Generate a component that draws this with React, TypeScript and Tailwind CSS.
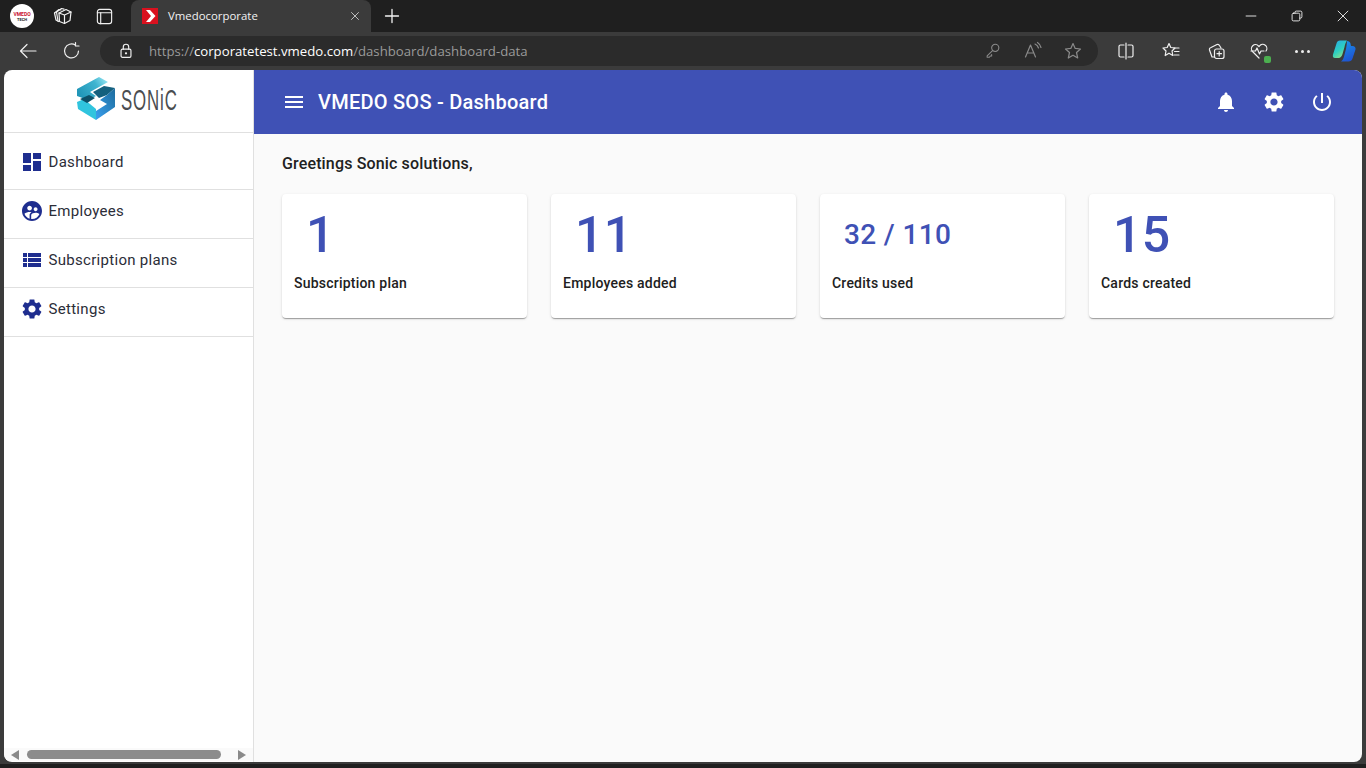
import React from "react";

const W = "#f0f0f0";
const Mat = ({ d, size = 24, cls = "" }: { d: string; size?: number; cls?: string }) => (
  <svg width={size} height={size} viewBox="0 0 24 24" fill="currentColor" className={cls}><path d={d} /></svg>
);
const gear = "M19.14,12.94c0.04-0.3,0.06-0.61,0.06-0.94c0-0.32-0.02-0.64-0.07-0.94l2.03-1.58c0.18-0.14,0.23-0.41,0.12-0.61 l-1.92-3.32c-0.12-0.22-0.37-0.29-0.59-0.22l-2.39,0.96c-0.5-0.38-1.03-0.7-1.62-0.94L14.4,2.81c-0.04-0.24-0.24-0.41-0.48-0.41 h-3.84c-0.24,0-0.43,0.17-0.47,0.41L9.25,5.35C8.66,5.59,8.12,5.92,7.63,6.29L5.24,5.33c-0.22-0.08-0.47,0-0.59,0.22L2.74,8.87 C2.62,9.08,2.66,9.34,2.86,9.48l2.03,1.58C4.84,11.36,4.8,11.69,4.8,12s0.02,0.64,0.07,0.94l-2.03,1.58 c-0.18,0.14-0.23,0.41-0.12,0.61l1.92,3.32c0.12,0.22,0.37,0.29,0.59,0.22l2.39-0.96c0.5,0.38,1.03,0.7,1.62,0.94l0.36,2.54 c0.05,0.24,0.24,0.41,0.48,0.41h3.84c0.24,0,0.44-0.17,0.47-0.41l0.36-2.54c0.59-0.24,1.13-0.56,1.62-0.94l2.39,0.96 c0.22,0.08,0.47,0,0.59-0.22l1.92-3.32c0.12-0.22,0.07-0.47-0.12-0.61L19.14,12.94z M12,15.6c-1.98,0-3.6-1.62-3.6-3.6 s1.62-3.6,3.6-3.6s3.6,1.62,3.6,3.6S13.98,15.6,12,15.6z";
const icons = {
  dash: "M3 13h8V3H3v10zm0 8h8v-6H3v6zm10 0h8V11h-8v10zm0-18v6h8V3h-8z",
  emp: "M11.99 2c-5.52 0-10 4.48-10 10s4.48 10 10 10 10-4.48 10-10-4.48-10-10-10zm3.61 6.34c1.07 0 1.93.86 1.93 1.93 0 1.07-.86 1.93-1.93 1.93-1.07 0-1.93-.86-1.93-1.93-.01-1.07.86-1.93 1.93-1.93zm-6-1.58c1.3 0 2.36 1.06 2.36 2.36 0 1.3-1.06 2.36-2.36 2.36s-2.36-1.06-2.36-2.36c0-1.31 1.05-2.36 2.36-2.36zm0 9.13v3.75c-2.4-.75-4.3-2.6-5.14-4.96 1.05-1.12 3.67-1.69 5.14-1.69.53 0 1.2.08 1.9.22-1.64.87-1.9 2.02-1.9 2.68zM11.99 20c-.27 0-.53-.01-.79-.04v-4.07c0-1.42 2.94-2.13 4.4-2.13 1.07 0 2.92.39 3.84 1.15-1.17 2.97-4.06 5.09-7.45 5.09z",
  list: "M3 14h4v-4H3v4zm0 5h4v-4H3v4zM3 9h4V5H3v4zm5 5h13v-4H8v4zm0 5h13v-4H8v4zM8 5v4h13V5H8z",
  bell: "M12 22c1.1 0 2-.9 2-2h-4c0 1.1.89 2 2 2zm6-6v-5c0-3.07-1.64-5.64-4.5-6.32V4c0-.83-.67-1.5-1.5-1.5s-1.5.67-1.5 1.5v.68C7.63 5.36 6 7.92 6 11v5l-2 2v1h16v-1l-2-2z",
  power: "M13 3h-2v10h2V3zm4.83 2.17l-1.42 1.42C17.99 7.86 19 9.81 19 12c0 3.87-3.13 7-7 7s-7-3.13-7-7c0-2.19 1.01-4.14 2.58-5.42L6.17 5.17C4.23 6.82 3 9.26 3 12c0 4.97 4.03 9 9 9s9-4.03 9-9c0-2.74-1.23-5.18-3.17-6.83z",
  menu: "M3 18h18v-2H3v2zm0-5h18v-2H3v2zm0-7v2h18V6H3z",
};

const Line = ({ children, size = 20, color = W, w = 1.2 }: { children: React.ReactNode; size?: number; color?: string; w?: number }) => (
  <svg width={size} height={size} viewBox="0 0 20 20" fill="none" stroke={color} strokeWidth={w} strokeLinecap="round" strokeLinejoin="round">{children}</svg>
);

const Box = ({ w, children }: { w: string; children: React.ReactNode }) => (
  <div className={`${w} h-full flex items-center justify-center shrink-0`}>{children}</div>
);

function TabStrip() {
  return (
    <div className="h-[32px] bg-[#1f1f1f] flex items-center shrink-0">
      <Box w="w-[44px]">
        <div className="w-[24px] h-[24px] rounded-full bg-white flex flex-col items-center justify-center leading-none">
          <span className="text-[5px] font-bold text-[#c8102e] leading-[6px]">VMEDO</span>
          <span className="text-[4px] font-bold text-[#222] leading-[5px]">TECH</span>
        </div>
      </Box>
      <Box w="w-[37px]">
        <Line size={20}>
          <path d="M1.5 7 L6 3.5 L8 4" />
          <path d="M3.5 6 L8.5 2.5 L11 3.2" />
          <path d="M1.5 7 L3 14 L5.5 15.5" />
          <path d="M3.5 6 L5 15" />
          <path d="M6 7 L13 3.5 L18 6 L17 14.5 L11.5 17.5 L6.5 15.5 Z" />
          <path d="M11.5 9 V17.5 M6 7 L11.5 9 L18 6" />
        </Line>
      </Box>
      <Box w="w-[46px]">
        <Line size={19}>
          <rect x="2.5" y="2.5" width="15" height="15" rx="2.5" />
          <path d="M2.5 6 H17.5" />
          <path d="M6 6 V17.5" />
        </Line>
      </Box>
      <div className="ml-[4px] w-[240px] h-full bg-[#3b3b3b] rounded-t-[8px] flex items-center shrink-0">
        <svg width="16" height="16" viewBox="0 0 16 16" className="ml-[11px] shrink-0">
          <rect width="16" height="16" fill="#d9111f" />
          <path d="M4 2 H8 L13.5 8 L8 14 H4 L9 8 Z" fill="#fff" />
        </svg>
        <span className="ml-[10px] text-[11.4px] text-[#f2f2f2] font-['Open_Sans',sans-serif] leading-none">Vmedocorporate</span>
        <div className="ml-auto mr-[9px]">
          <Line size={14} color="#d8d8d8"><path d="M5 5 L15 15 M15 5 L5 15" /></Line>
        </div>
      </div>
      <Box w="w-[42px]">
        <Line size={20} color="#f4f4f4" w={1.3}><path d="M10 3.5 V16.5 M3.5 10 H16.5" /></Line>
      </Box>
      <div className="ml-auto flex h-full">
        <Box w="w-[46px]"><Line size={14} color="#fff"><path d="M3 10 H17" /></Line></Box>
        <Box w="w-[46px]">
          <Line size={14} color="#fff">
            <rect x="3" y="6" width="11" height="11" rx="2" />
            <path d="M7 6 V5 A2 2 0 0 1 9 3 H15 A2 2 0 0 1 17 5 V11 A2 2 0 0 1 15 13 H14" />
          </Line>
        </Box>
        <Box w="w-[46px]"><Line size={14} color="#fff"><path d="M3 3 L17 17 M17 3 L3 17" /></Line></Box>
      </div>
    </div>
  );
}

function Toolbar() {
  return (
    <div className="h-[38px] bg-[#3b3b3b] flex items-center shrink-0">
      <Box w="w-[44px] ml-[6px]">
        <Line size={20}><path d="M2.5 10 H18 M9 3.5 L2.5 10 L9 16.5" /></Line>
      </Box>
      <Box w="w-[44px]">
        <Line size={20}><path d="M16.5 10 A7 7 0 1 1 13.5 4.2 M13.5 1.5 V5 H17" /></Line>
      </Box>
      <div className="ml-[6px] w-[998px] h-[30px] bg-[#2b2b2b] rounded-full flex items-center shrink-0">
        <Box w="w-[49px] pl-[2px]">
          <Line size={18} w={1.3}>
            <rect x="4.5" y="8" width="11" height="9" rx="1.5" />
            <path d="M7 8 V5.5 A3 3 0 0 1 13 5.5 V8" />
            <circle cx="10" cy="12.5" r="0.6" fill={W} />
          </Line>
        </Box>
        <div className="font-['Open_Sans',sans-serif] text-[13.2px] leading-none whitespace-nowrap text-[#9a9a9a] pt-[1px]">
          https://<span className="text-white">corporatetest.vmedo.com</span>/dashboard/dashboard-data
        </div>
        <div className="ml-auto flex h-full pr-[5px]">
          <Box w="w-[40px]">
            <Line size={18} color="#8a8a8a">
              <circle cx="12.5" cy="6.5" r="4" />
              <path d="M9.5 9.5 L3.5 15.5 V17 H6 L7 15.5 H8.5 V14" />
            </Line>
          </Box>
          <Box w="w-[40px]">
            <Line size={20} color="#8a8a8a">
              <path d="M2.5 16 L7.5 4 L12.5 16 M4.5 12 H10.5" />
              <path d="M12 3 A6 6 0 0 1 15.5 7 M14.5 1.5 A8 8 0 0 1 18 6.5" />
            </Line>
          </Box>
          <Box w="w-[40px]">
            <Line size={20} color="#8a8a8a">
              <path d="M10 2.5 L12.2 7.4 L17.5 8 L13.5 11.5 L14.7 17 L10 14.2 L5.3 17 L6.5 11.5 L2.5 8 L7.8 7.4 Z" />
            </Line>
          </Box>
        </div>
      </div>
      <Box w="w-[45px] ml-[5px]">
        <Line size={20}>
          <path d="M8 4 H4.5 A1.5 1.5 0 0 0 3 5.5 V14.5 A1.5 1.5 0 0 0 4.5 16 H8" />
          <path d="M12 4 H15.5 A1.5 1.5 0 0 1 17 5.5 V14.5 A1.5 1.5 0 0 1 15.5 16 H12" />
          <path d="M10 2 V18" />
        </Line>
      </Box>
      <Box w="w-[45px]">
        <Line size={20}>
          <path d="M8 2.5 L9.8 6.5 L14 7 L11 10 L11.8 14.5 L8 12.2 L4.2 14.5 L5 10 L2 7 L6.2 6.5 Z" />
          <path d="M13 7 H18 M13.5 10.5 H18 M13 14 H18" />
        </Line>
      </Box>
      <Box w="w-[45px]">
        <Line size={20}>
          <path d="M8 16 H6 L3.5 9 A2 2 0 0 1 5 6.5 L11 3.5 A2 2 0 0 1 13.5 4.5 L15 7" />
          <rect x="8.5" y="8" width="9.5" height="9.5" rx="2" />
          <path d="M13.2 10.5 V15 M11 12.7 H15.5" />
        </Line>
      </Box>
      <Box w="w-[41px]">
        <div className="relative">
          <Line size={20}>
            <path d="M10 17 L3.5 10.5 A4 4 0 0 1 9.5 5 L10 5.5 L10.5 5 A4 4 0 0 1 17 10" />
            <path d="M2 10 H6.5 L8 7 L10.5 13 L12 10 H15" />
          </Line>
          <div className="absolute right-[-2px] bottom-[-2px] w-[7px] h-[7px] rounded-[2px] bg-[#4caf50]" />
        </div>
      </Box>
      <Box w="w-[46px]">
        <div className="flex gap-[3px]">
          <div className="w-[3px] h-[3px] rounded-full bg-[#eee]" />
          <div className="w-[3px] h-[3px] rounded-full bg-[#eee]" />
          <div className="w-[3px] h-[3px] rounded-full bg-[#eee]" />
        </div>
      </Box>
      <Box w="w-[38px]">
        <svg width="24" height="24" viewBox="0 0 24 24">
          <defs>
            <linearGradient id="cpa" x1="0" y1="0" x2="0.6" y2="1">
              <stop offset="0" stopColor="#27a8e8" />
              <stop offset="0.6" stopColor="#2ecfc0" />
              <stop offset="1" stopColor="#8be08a" />
            </linearGradient>
            <linearGradient id="cpb" x1="0.3" y1="0" x2="0.7" y2="1">
              <stop offset="0" stopColor="#1a8fe8" />
              <stop offset="1" stopColor="#1f4fd0" />
            </linearGradient>
          </defs>
          <path d="M8 1.5 H15 C14 3 13 5 12.5 8 L10.5 15 C10 17 8.5 19 6.5 19 H3 C1 19 0.5 17.5 1 15.5 L4.5 4.5 C5 2.5 6.2 1.5 8 1.5 Z" fill="url(#cpa)" />
          <path d="M15 2 C17 2 18 3 18.5 4.5 L19 7 H20.5 C22.5 7 24 8.5 23.5 10.5 L20.5 19.5 C20 21.5 18.5 22.5 16.5 22.5 H9 C10.5 21.5 11.5 19.5 12 17.5 L14 10 C14.5 7 15 4 15 2 Z" fill="url(#cpb)" />
        </svg>
      </Box>
    </div>
  );
}

function Logo() {
  return (
    <div className="h-[63px] flex items-center justify-center border-b border-[#e0e0e0] pr-[1px] shrink-0">
      <svg width="38" height="43" viewBox="0 0 38 43" className="shrink-0 mb-[6px]">
        <defs>
          <linearGradient id="lg1" x1="0" y1="0.6" x2="1" y2="0.1">
            <stop offset="0" stopColor="#2196b8" />
            <stop offset="0.6" stopColor="#3fb4d0" />
            <stop offset="1" stopColor="#9be8f4" />
          </linearGradient>
          <linearGradient id="lg2" x1="0" y1="1" x2="1" y2="0">
            <stop offset="0" stopColor="#3aa0f0" />
            <stop offset="1" stopColor="#1d6c9c" />
          </linearGradient>
        </defs>
        <path d="M0 12 L22 0 L31 5 L13 15 L19 19 L11 23 L0 19 Z" fill="url(#lg1)" />
        <path d="M16 15 L27 9 L38 11 L30 18 L22 21 Z" fill="#14607e" />
        <path d="M30 18 L38 11 L38 30 L19 43 L19 34 L30 27 L23 23 Z" fill="url(#lg2)" />
        <path d="M0 25 L7 22 L19 32 L19 43 L1 32 Z" fill="#30c4de" />
        <path d="M3 22 L12 18 L18 21 L10 26 Z" fill="#0d5068" />
      </svg>
      <svg width="58" height="30" viewBox="0 0 58 30" className="ml-[6px] shrink-0 overflow-visible">
        <text transform="translate(0,24) scale(0.56,1)" fontFamily="'Liberation Sans',sans-serif" fontSize="30" fill="#4a4d50" letterSpacing="1.6">SONiC</text>
      </svg>
    </div>
  );
}

const Nav = ({ icon, label, first }: { icon: string; label: string; first?: boolean }) => (
  <div className={`${first ? "h-[57px] pt-[2px]" : "h-[49px] pb-[6px]"} flex items-center pl-[16px] border-b border-[#e0e0e0] text-[15px] tracking-[0.3px] text-[#2b2d38] shrink-0`}>
    <span className="text-[#1f2e8f] w-[24px] h-[24px] shrink-0"><Mat d={icon} /></span>
    <span className="ml-[4.5px] leading-none">{label}</span>
  </div>
);

function Sidebar() {
  return (
    <aside className="w-[250px] h-full bg-white border-r border-[#e0e0e0] flex flex-col shrink-0 box-border">
      <Logo />
      <Nav first icon={icons.dash} label="Dashboard" />
      <Nav icon={icons.emp} label="Employees" />
      <Nav icon={icons.list} label="Subscription plans" />
      <Nav icon={gear} label="Settings" />
      <div className="mt-auto h-[13px] bg-[#fafafa] flex items-center pl-[7px] mb-[1px]">
        <div className="w-0 h-0 border-y-[5px] border-y-transparent border-r-[8px] border-r-[#8a8a8a]" />
        <div className="ml-[8px] w-[194px] h-[9px] rounded-full bg-[#8c8c8c]" />
        <div className="ml-[17px] w-0 h-0 border-y-[5px] border-y-transparent border-l-[8px] border-l-[#8a8a8a]" />
      </div>
    </aside>
  );
}

const Card = ({ value, label, small }: { value: string; label: string; small?: boolean }) => (
  <div className="h-[124px] bg-white rounded-[4px] shadow-[0_2px_1px_-1px_rgba(0,0,0,0.2),0_1px_1px_0_rgba(0,0,0,0.14),0_1px_3px_0_rgba(0,0,0,0.12)] px-[12px] flex flex-col">
    <div className={`h-[80px] flex items-center pl-[12px] text-[#3f51b5] font-medium leading-none ${small ? "pt-[2px] text-[28px] tracking-[0.35px]" : "pt-[1px] text-[50px] tracking-[0.4px]"}`}>{value}</div>
    <div className="text-[14px] leading-[18px] font-medium text-[#212121] tracking-[0.22px]">{label}</div>
  </div>
);

function Main() {
  return (
    <main className="flex-1 min-w-0 h-full flex flex-col bg-[#fafafa]">
      <header className="h-[64px] bg-[#3f51b5] text-white flex items-center pl-[28px] pr-[16px] shrink-0">
        <Mat d={icons.menu} />
        <h1 className="ml-[12px] text-[20px] font-medium leading-none tracking-[0.25px]">VMEDO SOS - Dashboard</h1>
        <div className="ml-auto flex">
          <Box w="w-[48px] h-[48px]"><Mat d={icons.bell} /></Box>
          <Box w="w-[48px] h-[48px]"><Mat d={gear} /></Box>
          <Box w="w-[48px] h-[48px]"><Mat d={icons.power} /></Box>
        </div>
      </header>
      <div className="px-[28px] pt-[20px]">
        <p className="text-[16px] leading-[19px] font-medium text-[#212121] tracking-[0.15px]">Greetings Sonic solutions,</p>
        <div className="mt-[21px] grid grid-cols-4 gap-[24px]">
          <Card value="1" label="Subscription plan" />
          <Card value="11" label="Employees added" />
          <Card small value="32 / 110" label="Credits used" />
          <Card value="15" label="Cards created" />
        </div>
      </div>
    </main>
  );
}

export default function App() {
  return (
    <div className="w-[1366px] h-[768px] overflow-hidden bg-[#3b3b3b] flex flex-col font-['Roboto',sans-serif]">
      <TabStrip />
      <Toolbar />
      <div className="mx-[4px] h-[692px] rounded-[8px] overflow-hidden flex shrink-0">
        <Sidebar />
        <Main />
      </div>
      <div className="mt-[2px] flex-1 bg-[#1f1f1f]" />
    </div>
  );
}
